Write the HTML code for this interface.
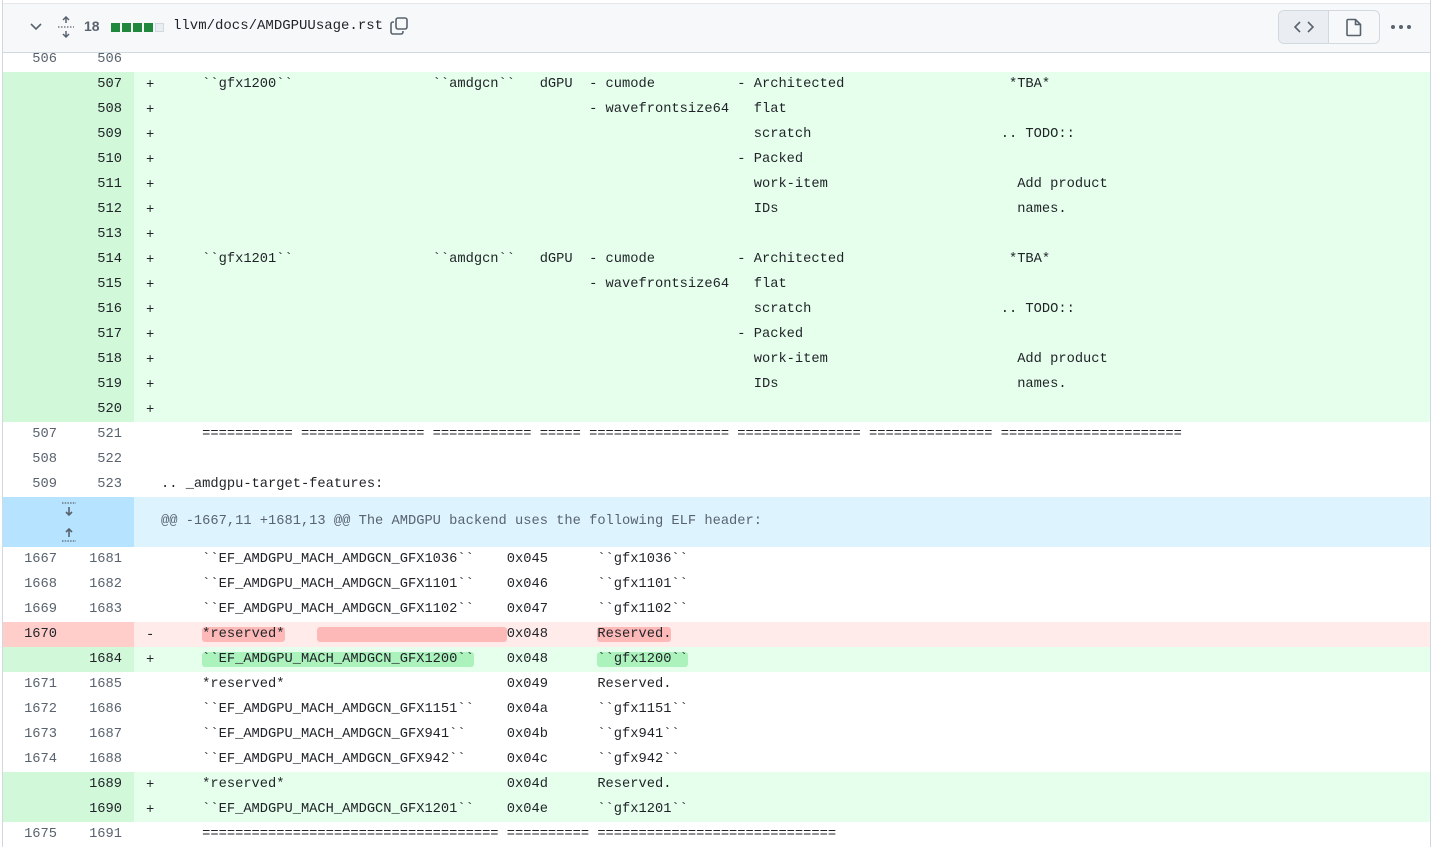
<!DOCTYPE html>
<html><head><meta charset="utf-8"><style>
*{margin:0;padding:0;box-sizing:border-box}
body{width:1448px;height:847px;overflow:hidden;background:#fff;position:relative;font-family:"Liberation Mono",monospace;font-size:13.73px;color:#1f2328}
#wrap{position:absolute;left:2px;top:0;width:1429px;height:847px;border-left:1px solid #d1d9e0;border-right:1px solid #d1d9e0}
#hdr{position:absolute;left:0;top:3px;width:1427px;height:50px;background:#f6f8fa;border-bottom:1px solid #d1d9e0;border-top:1px solid #e6e9ec;z-index:2;font-family:"Liberation Sans",sans-serif}
#rows{position:absolute;left:0;top:47px;width:1427px}
.r{position:relative;height:25px;line-height:25px;white-space:pre}
.n1,.n2{position:absolute;top:0;height:100%;width:66px;text-align:right;color:#59636e;padding-right:10px}
.n1{left:0;width:64px}
.n2{left:64px;width:67px;padding-right:12px}
.c{position:absolute;left:131px;right:0;top:0;height:100%}
.m{position:absolute;left:12px;top:1px}
.t{position:absolute;left:27px;top:0}
.add .n1,.add .n2{background:#d1f8d9;color:#1f2328}
.add .c{background:#e6ffec}
.del .n1,.del .n2{background:#ffcecb;color:#1f2328}
.del .c{background:#ffebe9}
.hl-d{background:#fdb8b8;border-radius:3px}
.hl-a{background:#abf2bc;border-radius:3px}
</style></head><body>
<div id="wrap">
<div id="hdr">
<svg style="position:absolute;left:26px;top:18px" width="14" height="10" viewBox="0 0 14 10"><path d="M2 2l5 5 5-5" fill="none" stroke="#59636e" stroke-width="1.6"/></svg>
<svg style="position:absolute;left:54px;top:12px" width="18" height="22" viewBox="0 0 18 22"><path d="M9 1v6M6 4l3-3 3 3M9 21v-6M6 18l3 3 3-3" fill="none" stroke="#59636e" stroke-width="1.5"/><path d="M1 11h16" stroke="#59636e" stroke-width="1.3" stroke-dasharray="1.5 1.5"/></svg>
<span style="position:absolute;left:81px;top:14px;font-weight:bold;font-size:14px;color:#59636e">18</span>
<div style="position:absolute;left:108px;top:19px;display:flex;gap:2px"><i style="width:9px;height:9px;background:#1f883d"></i><i style="width:9px;height:9px;background:#1f883d"></i><i style="width:9px;height:9px;background:#1f883d"></i><i style="width:9px;height:9px;background:#1f883d"></i><i style="width:9px;height:9px;background:#eaeef2;border:1px solid #d1d9e0"></i></div>
<span style="position:absolute;left:170px;top:14px;font-family:'Liberation Mono',monospace;font-size:14px;color:#1f2328">llvm/docs/AMDGPUUsage.rst</span>
<svg style="position:absolute;left:386px;top:12px" width="20" height="20" viewBox="0 0 20 20"><rect x="7" y="2" width="11" height="11" rx="2" fill="none" stroke="#59636e" stroke-width="1.6"/><path d="M5 6H4a2 2 0 0 0-2 2v8a2 2 0 0 0 2 2h8a2 2 0 0 0 2-2v-1" fill="none" stroke="#59636e" stroke-width="1.6"/></svg>
<div style="position:absolute;left:1275px;top:6px;width:102px;height:34px;border:1px solid #d1d9e0;border-radius:6px;overflow:hidden;background:#f6f8fa">
<div style="position:absolute;left:0;top:0;width:50px;height:100%;background:#eaeef2;border-right:1px solid #d1d9e0"></div>
<svg style="position:absolute;left:15px;top:9px" width="20" height="14" viewBox="0 0 20 14"><path d="M6 2L1 7l5 5M14 2l5 5-5 5" fill="none" stroke="#59636e" stroke-width="1.6"/></svg>
<svg style="position:absolute;left:67px;top:7px" width="16" height="19" viewBox="0 0 16 19"><path d="M2 1.5h7.5L14.5 6.5v10a1 1 0 0 1-1 1H2a1 1 0 0 1-1-1v-14a1 1 0 0 1 1-1zM9.5 1.5v5h5" fill="none" stroke="#59636e" stroke-width="1.6"/></svg>
</div>
<div style="position:absolute;left:1388px;top:21px;display:flex;gap:4px"><i style="width:4px;height:4px;border-radius:2px;background:#59636e"></i><i style="width:4px;height:4px;border-radius:2px;background:#59636e"></i><i style="width:4px;height:4px;border-radius:2px;background:#59636e"></i></div>
</div>
<div id="rows">
<div class="r"><span class="n1">506</span><span class="n2">506</span><span class="c"></span></div>
<div class="r add"><span class="n1"></span><span class="n2">507</span><span class="c"><span class="m">+</span><span class="t">     ``gfx1200``                 ``amdgcn``   dGPU  - cumode          - Architected                    *TBA*</span></span></div>
<div class="r add"><span class="n1"></span><span class="n2">508</span><span class="c"><span class="m">+</span><span class="t">                                                    - wavefrontsize64   flat</span></span></div>
<div class="r add"><span class="n1"></span><span class="n2">509</span><span class="c"><span class="m">+</span><span class="t">                                                                        scratch                       .. TODO::</span></span></div>
<div class="r add"><span class="n1"></span><span class="n2">510</span><span class="c"><span class="m">+</span><span class="t">                                                                      - Packed</span></span></div>
<div class="r add"><span class="n1"></span><span class="n2">511</span><span class="c"><span class="m">+</span><span class="t">                                                                        work-item                       Add product</span></span></div>
<div class="r add"><span class="n1"></span><span class="n2">512</span><span class="c"><span class="m">+</span><span class="t">                                                                        IDs                             names.</span></span></div>
<div class="r add"><span class="n1"></span><span class="n2">513</span><span class="c"><span class="m">+</span><span class="t"></span></span></div>
<div class="r add"><span class="n1"></span><span class="n2">514</span><span class="c"><span class="m">+</span><span class="t">     ``gfx1201``                 ``amdgcn``   dGPU  - cumode          - Architected                    *TBA*</span></span></div>
<div class="r add"><span class="n1"></span><span class="n2">515</span><span class="c"><span class="m">+</span><span class="t">                                                    - wavefrontsize64   flat</span></span></div>
<div class="r add"><span class="n1"></span><span class="n2">516</span><span class="c"><span class="m">+</span><span class="t">                                                                        scratch                       .. TODO::</span></span></div>
<div class="r add"><span class="n1"></span><span class="n2">517</span><span class="c"><span class="m">+</span><span class="t">                                                                      - Packed</span></span></div>
<div class="r add"><span class="n1"></span><span class="n2">518</span><span class="c"><span class="m">+</span><span class="t">                                                                        work-item                       Add product</span></span></div>
<div class="r add"><span class="n1"></span><span class="n2">519</span><span class="c"><span class="m">+</span><span class="t">                                                                        IDs                             names.</span></span></div>
<div class="r add"><span class="n1"></span><span class="n2">520</span><span class="c"><span class="m">+</span><span class="t"></span></span></div>
<div class="r"><span class="n1">507</span><span class="n2">521</span><span class="c"><span class="t">     =========== =============== ============ ===== ================= =============== =============== ======================</span></span></div>
<div class="r"><span class="n1">508</span><span class="n2">522</span><span class="c"></span></div>
<div class="r"><span class="n1">509</span><span class="n2">523</span><span class="c"><span class="t">.. _amdgpu-target-features:</span></span></div>
<div class="r" style="height:50px;line-height:50px"><span style="position:absolute;left:0;top:0;width:131px;height:50px;background:#b6e3ff">
<svg style="position:absolute;left:58px;top:5px" width="16" height="40" viewBox="0 0 16 40"><path d="M1 1h14M1 39h14" stroke="#59636e" stroke-width="1.2" stroke-dasharray="1.5 1.2"/><path d="M8 5v8M5 10l3 3 3-3M8 35v-8M5 30l3-3 3 3" fill="none" stroke="#59636e" stroke-width="1.6"/></svg></span><span class="c" style="background:#ddf4ff;color:#59636e"><span class="t">@@ -1667,11 +1681,13 @@ The AMDGPU backend uses the following ELF header:</span></span></div>
<div class="r"><span class="n1">1667</span><span class="n2">1681</span><span class="c"><span class="t">     ``EF_AMDGPU_MACH_AMDGCN_GFX1036``    0x045      ``gfx1036``</span></span></div>
<div class="r"><span class="n1">1668</span><span class="n2">1682</span><span class="c"><span class="t">     ``EF_AMDGPU_MACH_AMDGCN_GFX1101``    0x046      ``gfx1101``</span></span></div>
<div class="r"><span class="n1">1669</span><span class="n2">1683</span><span class="c"><span class="t">     ``EF_AMDGPU_MACH_AMDGCN_GFX1102``    0x047      ``gfx1102``</span></span></div>
<div class="r del"><span class="n1">1670</span><span class="n2"></span><span class="c"><span class="m">-</span><span class="t">     <span class="hl-d">*reserved*</span>    <span class="hl-d">                       </span>0x048      <span class="hl-d">Reserved.</span></span></span></div>
<div class="r add"><span class="n1"></span><span class="n2">1684</span><span class="c"><span class="m">+</span><span class="t">     <span class="hl-a">``EF_AMDGPU_MACH_AMDGCN_GFX1200``</span>    0x048      <span class="hl-a">``gfx1200``</span></span></span></div>
<div class="r"><span class="n1">1671</span><span class="n2">1685</span><span class="c"><span class="t">     *reserved*                           0x049      Reserved.</span></span></div>
<div class="r"><span class="n1">1672</span><span class="n2">1686</span><span class="c"><span class="t">     ``EF_AMDGPU_MACH_AMDGCN_GFX1151``    0x04a      ``gfx1151``</span></span></div>
<div class="r"><span class="n1">1673</span><span class="n2">1687</span><span class="c"><span class="t">     ``EF_AMDGPU_MACH_AMDGCN_GFX941``     0x04b      ``gfx941``</span></span></div>
<div class="r"><span class="n1">1674</span><span class="n2">1688</span><span class="c"><span class="t">     ``EF_AMDGPU_MACH_AMDGCN_GFX942``     0x04c      ``gfx942``</span></span></div>
<div class="r add"><span class="n1"></span><span class="n2">1689</span><span class="c"><span class="m">+</span><span class="t">     *reserved*                           0x04d      Reserved.</span></span></div>
<div class="r add"><span class="n1"></span><span class="n2">1690</span><span class="c"><span class="m">+</span><span class="t">     ``EF_AMDGPU_MACH_AMDGCN_GFX1201``    0x04e      ``gfx1201``</span></span></div>
<div class="r"><span class="n1">1675</span><span class="n2">1691</span><span class="c"><span class="t">     ==================================== ========== =============================</span></span></div>
</div>
</div>
</body></html>
